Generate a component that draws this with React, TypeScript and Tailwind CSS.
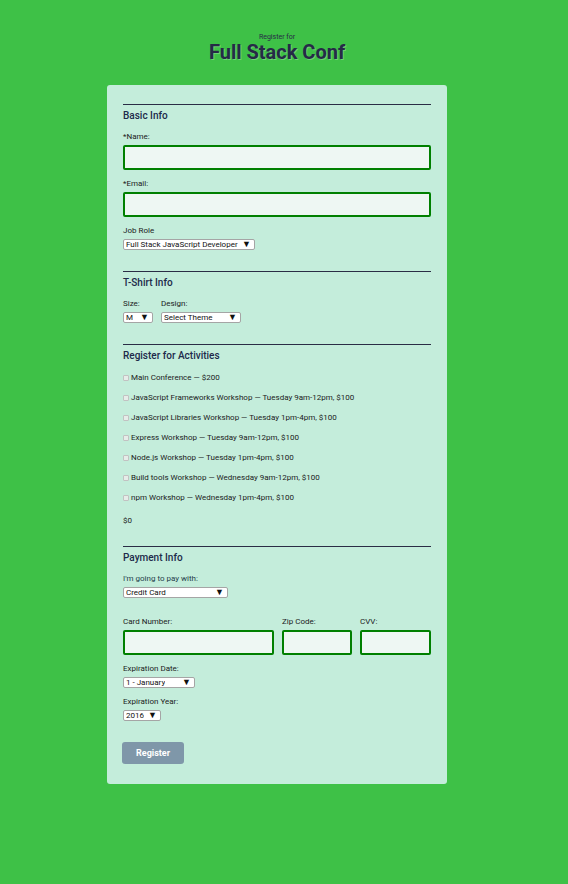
import React from 'react';

const activities = [
  'Main Conference — $200',
  'JavaScript Frameworks Workshop — Tuesday 9am-12pm, $100',
  'JavaScript Libraries Workshop — Tuesday 1pm-4pm, $100',
  'Express Workshop — Tuesday 9am-12pm, $100',
  'Node.js Workshop — Tuesday 1pm-4pm, $100',
  'Build tools Workshop — Wednesday 9am-12pm, $100',
  'npm Workshop — Wednesday 1pm-4pm, $100',
];

const Label: React.FC<{ children: React.ReactNode; className?: string }> = ({ children, className = '' }) => (
  <div className={`h-[10px] text-[8px] leading-[12px] text-[#1b1b1b] ${className}`}>{children}</div>
);

const TextInput: React.FC<{ className?: string }> = ({ className = '' }) => (
  <div className={`h-[25px] rounded-[2px] border-2 border-[#008000] bg-[#eef7f3] ${className}`} />
);

const Select: React.FC<{ value: string; width: string }> = ({ value, width }) => (
  <div
    className={`flex h-[11px] items-center justify-between rounded-[2px] border border-[#a5a5a5] bg-white pl-[2px] pr-[3px] text-[8px] leading-[9px] text-[#111] ${width}`}
  >
    <span className="truncate">{value}</span>
    <span className="text-[9px] leading-none">▼</span>
  </div>
);

const SectionTitle: React.FC<{ title: string; first?: boolean }> = ({ title, first }) => (
  <div className={first ? '' : 'mt-[21px]'}>
    <div className="h-px bg-[#2a2d45]" />
    <h2 className="mt-[4px] h-[12px] text-[10px] font-medium leading-[14px] text-[#20294a]">{title}</h2>
  </div>
);

export default function App() {
  return (
    <div className="min-h-[884px] bg-[#3ec147] pt-[33px] pr-[14px] pb-[100px] font-['Roboto',sans-serif]">
      <header className="text-center text-[#262a46]">
        <div className="text-[7px] leading-[8px]">Register for</div>
        <h1 className="text-[20px] font-bold leading-[22px] [text-shadow:1px_1px_0_rgba(255,255,255,0.25)]">
          Full Stack Conf
        </h1>
      </header>

      <form className="mx-auto mt-[22px] w-[340px] rounded-[3px] bg-[#c4eddb] px-[16px] pt-[19px] pb-[20px]">
        <SectionTitle title="Basic Info" first />
        <Label className="mt-[10px]">*Name:</Label>
        <TextInput className="mt-[4px]" />
        <Label className="mt-[8px]">*Email:</Label>
        <TextInput className="mt-[4px]" />
        <Label className="mt-[8px]">Job Role</Label>
        <div className="mt-[4px]">
          <Select value="Full Stack JavaScript Developer" width="w-[132px]" />
        </div>

        <SectionTitle title="T-Shirt Info" />
        <div className="mt-[10px] flex gap-[8px]">
          <div>
            <Label>Size:</Label>
            <div className="mt-[4px]">
              <Select value="M" width="w-[30px]" />
            </div>
          </div>
          <div>
            <Label>Design:</Label>
            <div className="mt-[4px]">
              <Select value="Select Theme" width="w-[80px]" />
            </div>
          </div>
        </div>

        <SectionTitle title="Register for Activities" />
        <div className="mt-[11px] flex flex-col gap-[10px]">
          {activities.map((a) => (
            <label key={a} className="flex h-[10px] items-center gap-[2px] pt-[2px] text-[8px] leading-[10px] text-[#1b1b1b]">
              <span className="h-[6px] w-[6px] rounded-[1px] border border-[#c2c2c2] bg-[#e6ece8]" />
              {a}
            </label>
          ))}
        </div>
        <Label className="mt-[13px]">$0</Label>

        <SectionTitle title="Payment Info" />
        <Label className="mt-[10px] text-[#1f3d4a]">I'm going to pay with:</Label>
        <div className="mt-[4px]">
          <Select value="Credit Card" width="w-[105px]" />
        </div>

        <div className="mt-[18px] grid grid-cols-[151px_70px_1fr] gap-x-[8px]">
          <Label>Card Number:</Label>
          <Label>Zip Code:</Label>
          <Label>CVV:</Label>
          <TextInput className="mt-[4px]" />
          <TextInput className="mt-[4px]" />
          <TextInput className="mt-[4px]" />
        </div>

        <Label className="mt-[8px]">Expiration Date:</Label>
        <div className="mt-[4px]">
          <Select value="1 - January" width="w-[72px]" />
        </div>
        <Label className="mt-[8px]">Expiration Year:</Label>
        <div className="mt-[4px]">
          <Select value="2016" width="w-[38px]" />
        </div>

        <button
          type="button"
          className="mt-[21px] -ml-px h-[22px] w-[62px] rounded-[3px] bg-[#7f97a9] pt-[2px] text-[9px] font-bold text-white"
        >
          Register
        </button>
      </form>
    </div>
  );
}
